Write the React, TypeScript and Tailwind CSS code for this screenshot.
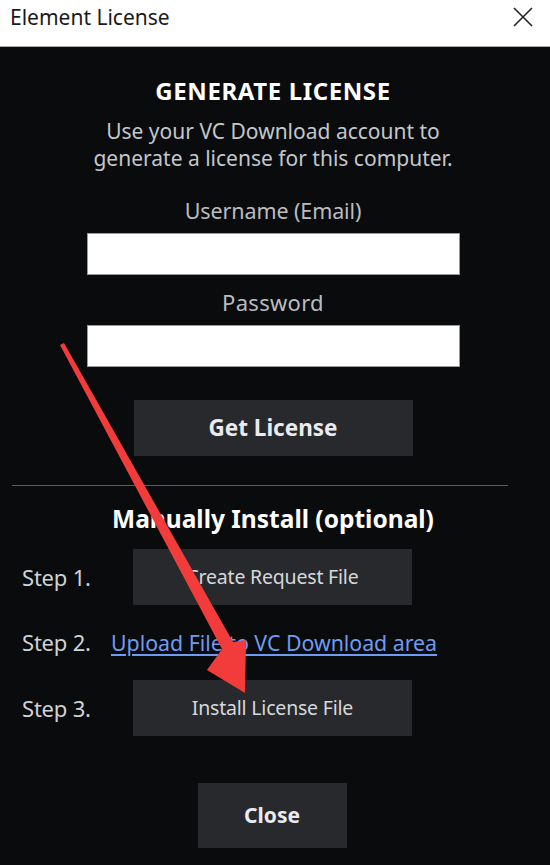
import React from "react";

const FONT = "font-['Noto_Sans','Open_Sans',sans-serif]";

function DarkButton({ label, bold, className }: { label: string; bold?: boolean; className?: string }) {
  return (
    <button
      type="button"
      className={
        "flex items-center justify-center bg-[#28292d] " +
        (bold ? "font-bold text-[#e9ebee] " : "text-[19.5px] text-[#d6d8db] tracking-[-0.2px] ") +
        (className ?? "")
      }
    >
      {label}
    </button>
  );
}

function StepRow({ step, children, h }: { step: string; children: React.ReactNode; h: string }) {
  return (
    <div className={"flex items-center " + h}>
      <span className="w-[111px] shrink-0 pl-[22px] text-[22px] text-[#d0d3d6] tracking-[-0.2px]">{step}</span>
      {children}
    </div>
  );
}

function RedArrow() {
  return (
    <svg className="pointer-events-none absolute left-0 top-0" width="550" height="865" viewBox="0 0 550 865">
      <polygon
        points="60,345 64,343 233,642 246,640 245,693 207,670 222,649"
        fill="#f23b3b"
      />
    </svg>
  );
}

export default function App() {
  return (
    <div className={"relative h-[865px] w-[550px] overflow-hidden bg-[#0a0b0d] " + FONT}>
      <div className="flex h-[47px] items-center justify-between border-b border-[#a8a8a8] bg-white pb-[12px] pl-[10px] pr-[17px]">
        <span className="text-[21px] leading-[28px] text-[#1a1a1a]">Element License</span>
        <svg width="20" height="20" viewBox="0 0 20 20" className="text-[#222]">
          <path d="M1 1 L19 19 M19 1 L1 19" stroke="currentColor" strokeWidth="1.6" />
        </svg>
      </div>

      <div className="flex w-[546px] flex-col items-center">
        <h1 className="mt-[32px] text-[24px] font-bold leading-[24px] text-white tracking-[0.6px]">GENERATE LICENSE</h1>
        <p className="mt-[15px] text-center text-[21px] leading-[27px] text-[#c3c7cc]">
          Use your VC Download account to
          <br />
          generate a license for this computer.
        </p>
        <label className="mt-[25px] text-[21.5px] leading-[27px] text-[#b9bdc2] tracking-[-0.1px]">Username (Email)</label>
        <input className="mt-[9px] h-[42px] w-[373px] border border-[#9a9a9a] bg-white outline-none" />
        <label className="mt-[14px] text-[22px] leading-[27px] text-[#b9bdc2] tracking-[0.3px]">Password</label>
        <input type="password" className="mt-[9px] h-[42px] w-[373px] border border-[#9a9a9a] bg-white outline-none" />
        <DarkButton label="Get License" bold className="mt-[33px] h-[56px] w-[279px] text-[22.5px]" />
      </div>

      <div className="mx-[12px] mt-[29px] w-[496px] border-t border-[#5c5d60]" />

      <h2 className="mt-[19px] w-[546px] text-center text-[24.5px] font-bold leading-[27px] text-white">
        Manually Install (optional)
      </h2>

      <div className="mt-[17px] flex flex-col">
        <StepRow step="Step 1." h="h-[56px]">
          <DarkButton label="Create Request File" className="ml-[22px] h-[56px] w-[279px]" />
        </StepRow>
        <StepRow step="Step 2." h="h-[75px]">
          <a href="#" className="text-[21.3px] text-[#6f9cf0] underline underline-offset-[3px]">
            Upload File to VC Download area
          </a>
        </StepRow>
        <StepRow step="Step 3." h="h-[56px]">
          <DarkButton label="Install License File" className="ml-[22px] h-[56px] w-[279px]" />
        </StepRow>
      </div>

      <div className="mt-[47px] flex justify-center pr-[6px]">
        <DarkButton label="Close" bold className="h-[65px] w-[149px] text-[21px]" />
      </div>

      <RedArrow />
    </div>
  );
}
